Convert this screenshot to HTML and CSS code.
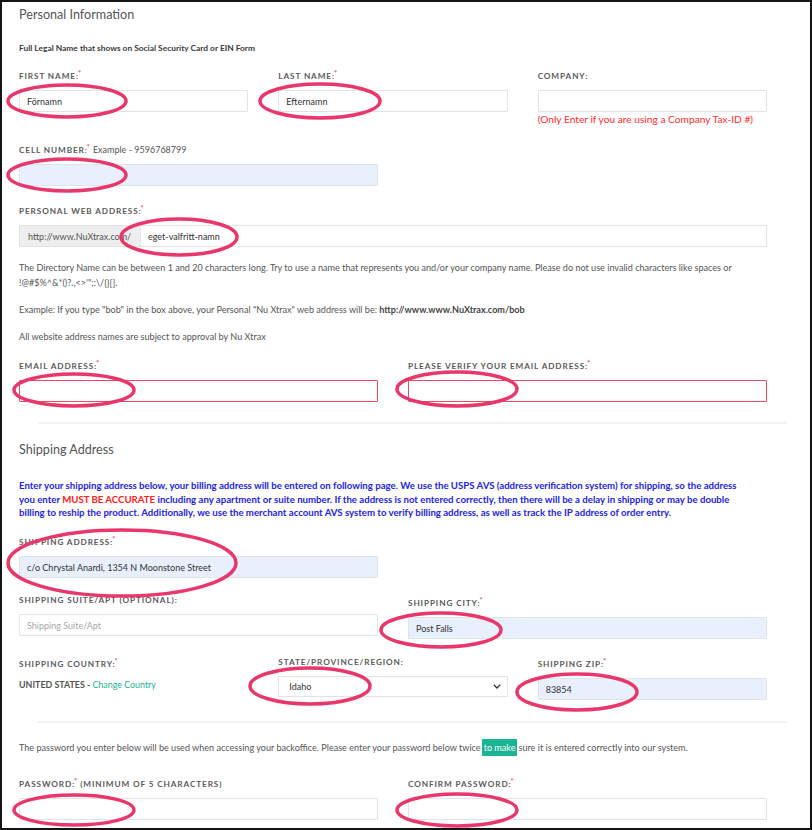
FILE: index.html
```html
<!DOCTYPE html>
<html lang="en">
<head>
<meta charset="utf-8">
<title>Personal Information</title>
<link rel="stylesheet" href="styles.css">
</head>
<body>
<div class="frame">
  <div class="content">
    <h3 class="section-title">Personal Information</h3>
    <p class="legal">Full Legal Name that shows on Social Security Card or EIN Form</p>

    <div class="row three r1">
      <div class="field">
        <label class="lbl">First Name:<span class="req">*</span></label>
        <input class="inp" value="Förnamn">
      </div>
      <div class="field">
        <label class="lbl">Last Name:<span class="req">*</span></label>
        <input class="inp" value="Efternamn">
      </div>
      <div class="field company">
        <label class="lbl">Company:</label>
        <input class="inp" value="">
        <div class="note-red">(Only Enter if you are using a Company Tax-ID #)</div>
      </div>
    </div>

    <div class="row two r-cell">
      <div class="field">
        <label class="lbl">Cell Number:<span class="req">*</span> <span class="lbl-plain">Example - 9596768799</span></label>
        <input class="inp autofill" value="">
      </div>
    </div>

    <div class="field r-web">
      <label class="lbl">Personal Web Address:<span class="req">*</span></label>
      <div class="input-group">
        <span class="addon">http://www.NuXtrax.com/</span>
        <input class="inp grow" value="eget-valfritt-namn">
      </div>
    </div>

    <p class="help p-dir">The Directory Name can be between 1 and 20 characters long. Try to use a name that represents you and/or your company name. Please do not use invalid characters like spaces or<br>!@#$%^&amp;*()?.,&lt;&gt;'";:\/{}[].</p>
    <p class="help p-ex">Example: If you type "bob" in the box above, your Personal "Nu Xtrax" web address will be: <strong>http://www.www.NuXtrax.com/bob</strong></p>
    <p class="help p-all">All website address names are subject to approval by Nu Xtrax</p>

    <div class="row two r-email">
      <div class="field">
        <label class="lbl">Email Address:<span class="req">*</span></label>
        <input class="inp error" value="">
      </div>
      <div class="field">
        <label class="lbl">Please Verify Your Email Address:<span class="req">*</span></label>
        <input class="inp error" value="">
      </div>
    </div>

    <hr class="divider d1">

    <h3 class="section-title ship-title">Shipping Address</h3>
    <p class="blue">Enter your shipping address below, your billing address will be entered on following page. We use the USPS AVS (address verification system) for shipping, so the address<br>you enter <span class="must">MUST BE ACCURATE</span> including any apartment or suite number. If the address is not entered correctly, then there will be a delay in shipping or may be double<br>billing to reship the product. Additionally, we use the merchant account AVS system to verify billing address, as well as track the IP address of order entry.</p>

    <div class="row two r-shipaddr">
      <div class="field">
        <label class="lbl">Shipping Address:<span class="req">*</span></label>
        <input class="inp autofill" value="c/o Chrystal Anardi, 1354 N Moonstone Street">
      </div>
    </div>

    <div class="row two r-suite">
      <div class="field">
        <label class="lbl">Shipping Suite/Apt (Optional):</label>
        <input class="inp" placeholder="Shipping Suite/Apt">
      </div>
      <div class="field city">
        <label class="lbl">Shipping City:<span class="req">*</span></label>
        <input class="inp autofill" value="Post Falls">
      </div>
    </div>

    <div class="row three r-country">
      <div class="field">
        <label class="lbl">Shipping Country:<span class="req">*</span></label>
        <div class="country">UNITED STATES - <a class="teal-link" href="#">Change Country</a></div>
      </div>
      <div class="field state">
        <label class="lbl">State/Province/Region:</label>
        <div class="select">
          <span>Idaho</span>
          <svg class="chev" width="8" height="5" viewBox="0 0 8 5"><path d="M0.8 0.8 L4 4 L7.2 0.8" fill="none" stroke="#333" stroke-width="1.3"/></svg>
        </div>
      </div>
      <div class="field">
        <label class="lbl">Shipping Zip:<span class="req">*</span></label>
        <input class="inp autofill" value="83854">
      </div>
    </div>

    <hr class="divider d2">

    <p class="help pw-note">The password you enter below will be used when accessing your backoffice. Please enter your password below twice<span class="hl">to make</span>sure it is entered correctly into our system.</p>

    <div class="row two r-pw">
      <div class="field">
        <label class="lbl">Password:<span class="req">*</span> (Minimum of 5 characters)</label>
        <input class="inp" type="password" value="">
      </div>
      <div class="field">
        <label class="lbl">Confirm Password:<span class="req">*</span></label>
        <input class="inp" type="password" value="">
      </div>
    </div>
  </div>

  <svg class="marks" width="812" height="830" viewBox="0 0 812 830">
    <g fill="none" stroke="#e8386b" stroke-width="3.5">
      <ellipse cx="67" cy="101" rx="59" ry="16"/>
      <ellipse cx="320" cy="101" rx="60" ry="17"/>
      <ellipse cx="67" cy="175" rx="59" ry="16"/>
      <ellipse cx="179" cy="237" rx="58" ry="18"/>
      <ellipse cx="74" cy="390" rx="60" ry="16"/>
      <ellipse cx="457" cy="389" rx="60" ry="17"/>
      <ellipse cx="122" cy="563" rx="114" ry="33"/>
      <ellipse cx="441" cy="630" rx="60" ry="17"/>
      <ellipse cx="310" cy="686" rx="60" ry="18"/>
      <ellipse cx="577" cy="692" rx="60" ry="18"/>
      <ellipse cx="74" cy="810" rx="60" ry="15"/>
      <ellipse cx="457" cy="810" rx="60" ry="16"/>
    </g>
  </svg>
</div>
</body>
</html>
```

FILE: styles.css
```css
* { box-sizing: border-box; }

html, body {
  margin: 0;
  padding: 0;
  background: #fff;
}

.frame {
  position: relative;
  width: 812px;
  height: 830px;
  border: 2px solid #141414;
  overflow: hidden;
  font-family: Lato, "Liberation Sans", sans-serif;
  color: #555;
}

.content {
  padding: 4px 43px 0 17px;
}

.section-title {
  margin: 0;
  font-family: Lato, "Liberation Sans", sans-serif;
  font-weight: 400;
  font-size: 12.6px;
  line-height: 18px;
  color: #555;
}

.legal {
  margin: 18px 0 0;
  font-size: 8.4px;
  line-height: 12px;
  font-weight: 700;
  color: #3a3a3a;
}

.row { display: grid; column-gap: 30px; align-items: start; }
.three { grid-template-columns: repeat(3, 1fr); }
.two { grid-template-columns: 1fr 1fr; }

.field { display: flex; flex-direction: column; }

.lbl {
  display: block;
  font-size: 8.2px;
  line-height: 12px;
  font-weight: 700;
  letter-spacing: 0.9px;
  text-transform: uppercase;
  color: #5a5a5a;
  margin-bottom: 8px;
  white-space: nowrap;
}

.lbl-plain {
  text-transform: none;
  letter-spacing: 0;
  font-weight: 400;
  font-size: 9px;
  color: #555;
}

.req {
  color: #ed4d5f;
  font-size: 7.5px;
  letter-spacing: 0;
  vertical-align: top;
  position: relative;
  top: -2px;
  margin-left: -1px;
}

.inp {
  display: block;
  width: 100%;
  height: 22px;
  margin: 0;
  padding: 0 7px;
  border: 1px solid #e2e3e4;
  border-radius: 1px;
  background: #fff;
  font-family: Lato, "Liberation Sans", sans-serif;
  font-size: 9px;
  color: #333;
  outline: none;
}

.inp::placeholder { color: #a8a8a8; }

.inp.autofill { background: #e8f0fe; }
.inp.error { border-color: #ec4a60; }

.note-red {
  font-size: 10.2px;
  line-height: 14px;
  color: #ff2b2b;
  white-space: nowrap;
}

.r1 { margin-top: 16px; }
.r-cell { margin-top: 18px; }
.r-web { margin-top: 19px; }

.input-group { display: flex; }

.addon {
  display: flex;
  align-items: center;
  width: 121px;
  height: 22px;
  padding-left: 8px;
  background: #eee;
  border: 1px solid #e2e3e4;
  border-right: none;
  font-size: 9px;
  color: #555;
  white-space: nowrap;
}

.grow { flex: 1; width: auto; }

.help {
  margin: 0;
  font-size: 9.08px;
  line-height: 15px;
  color: #555;
}

.help strong { font-weight: 700; color: #444; }

.p-dir { margin-top: 13px; }
.p-ex { margin-top: 12px; }
.p-all { margin-top: 12px; }

.r-email { margin-top: 16px; }

.divider {
  border: none;
  height: 2px;
  background: #f2f2f2;
  margin: 0 -20px 0 19px;
}

.d1 { margin-top: 20px; }

.ship-title { margin-top: 17px; }

.blue {
  margin: 20px 0 0;
  font-size: 9.65px;
  line-height: 13.5px;
  font-weight: 700;
  color: #2323e6;
  white-space: nowrap;
}

.must { color: #ff2020; }

.r-shipaddr { margin-top: 16.5px; }
.r-suite { margin-top: 16px; }
.city { padding-top: 3px; }

.r-country { margin-top: 19px; }
.state { margin-top: -2px; }

.country {
  font-size: 8.9px;
  line-height: 14px;
  font-weight: 700;
  color: #555;
}

.teal-link {
  color: #1ab394;
  font-weight: 400;
  text-decoration: none;
}

.select {
  display: flex;
  align-items: center;
  justify-content: space-between;
  height: 21px;
  padding: 0 6px 0 10px;
  border: 1px solid #e2e3e4;
  background: #fff;
  font-size: 9px;
  color: #333;
}

.d2 { margin-top: 21px; }

.pw-note {
  margin-top: 18px;
  line-height: 14px;
}

.hl {
  background: #1ab394;
  color: #fff;
  padding: 3px 2px;
  margin: 0 1px;
}

.r-pw { margin-top: 23px; }

.marks {
  position: absolute;
  left: -2px;
  top: -2px;
  pointer-events: none;
}
```
